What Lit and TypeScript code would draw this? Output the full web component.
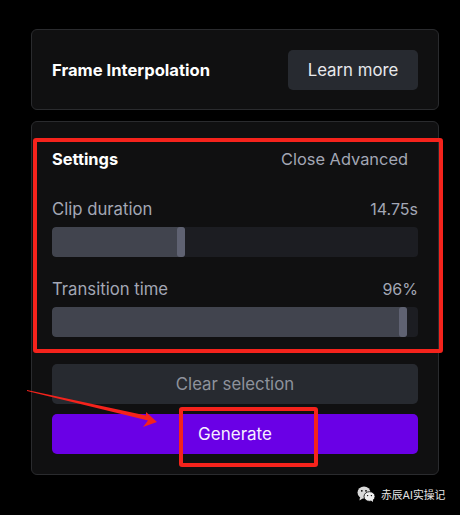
import { LitElement, html, css, svg } from "lit";
import { customElement, property } from "lit/decorators.js";

@customElement("range-row")
export class RangeRow extends LitElement {
  @property() label = "";
  @property() value = "";
  @property({ type: Number }) fill = 0;

  render() {
    return html`
      <div class="head">
        <span class="label">${this.label}</span>
        <span>${this.value}</span>
      </div>
      <div class="track">
        <div class="fill" style="width: ${this.fill}px">
          <div class="thumb"></div>
        </div>
      </div>
    `;
  }

  static styles = css`
    :host {
      display: block;
    }
    .head {
      display: flex;
      justify-content: space-between;
      align-items: center;
      height: 20px;
      font-size: 16px;
      color: #a3a7b5;
    }
    .label {
      font-size: 16.7px;
    }
    .track {
      margin-top: 8px;
      height: 30px;
      border-radius: 4px;
      background: #1c1d22;
      overflow: hidden;
    }
    .fill {
      height: 100%;
      display: flex;
      justify-content: flex-end;
      background: #41444e;
      border-radius: 4px;
    }
    .thumb {
      width: 8px;
      height: 100%;
      border-radius: 3px;
      background: #5f6272;
    }
  `;
}

@customElement("app-root")
export class AppRoot extends LitElement {
  render() {
    return html`
      <div class="page">
        <section class="card intro">
          <h2>Frame Interpolation</h2>
          <button class="learn">Learn more</button>
        </section>

        <section class="card panel">
          <div class="settings-head">
            <h3>Settings</h3>
            <span class="advanced">Close Advanced</span>
          </div>
          <div class="ranges">
            <range-row label="Clip duration" value="14.75s" .fill=${133}></range-row>
            <range-row label="Transition time" value="96%" .fill=${355}></range-row>
          </div>
          <div class="actions">
            <button class="clear">Clear selection</button>
            <button class="generate">Generate</button>
          </div>
        </section>

        <div class="mark settings-mark"></div>
        <div class="mark generate-mark"></div>
        <svg class="arrow" width="140" height="50" viewBox="0 0 140 50">
          ${svg`<path d="M0 0 L119 25.5 L119 22 L130 32 L116 37 L121 30.5 L0 1 Z" fill="#f5231c" />`}
        </svg>

        <div class="watermark">
          <svg width="18" height="16" viewBox="0 0 18 16">
            ${svg`
              <ellipse cx="7" cy="6.5" rx="6.5" ry="6" fill="#d9d9d9" />
              <path d="M3 11 L2.5 14.5 L6.5 12 Z" fill="#d9d9d9" />
              <ellipse cx="12.5" cy="10.5" rx="5.5" ry="4.8" fill="#efefef" stroke="#000" stroke-width="0.8" />
              <path d="M14 14.5 L16 16 L15.8 13 Z" fill="#efefef" />
              <circle cx="4.8" cy="4.8" r="0.9" fill="#000" />
              <circle cx="9" cy="4.8" r="0.9" fill="#000" />
              <circle cx="10.6" cy="9.6" r="0.7" fill="#000" />
              <circle cx="14.4" cy="9.6" r="0.7" fill="#000" />
            `}
          </svg>
          <span>赤辰AI实操记</span>
        </div>
      </div>
    `;
  }

  static styles = css`
    :host {
      display: block;
      background: #000;
      font-family: Inter, "Noto Sans CJK SC", sans-serif;
    }
    .page {
      position: relative;
      box-sizing: border-box;
      height: 515px;
      padding: 29px 21px 0 31px;
      display: flex;
      flex-direction: column;
      gap: 11px;
      overflow: hidden;
    }
    .card {
      box-sizing: border-box;
      background: #101011;
      border: 1px solid #2a2b2e;
      border-radius: 6px;
    }
    .intro {
      height: 81px;
      padding: 0 20px;
      display: flex;
      align-items: center;
      justify-content: space-between;
    }
    h2,
    h3 {
      margin: 0;
      color: #fff;
      font-weight: 700;
    }
    h2 {
      font-size: 16.6px;
    }
    h3 {
      font-size: 16.4px;
    }
    button {
      border: 0;
      font-family: inherit;
      font-size: 16.8px;
      border-radius: 5px;
      padding: 0;
    }
    .learn {
      width: 130px;
      height: 40px;
      background: #272a30;
      color: #e8e9ec;
    }
    .panel {
      height: 354px;
      padding: 27px 20px 0;
    }
    .settings-head {
      display: flex;
      justify-content: space-between;
      align-items: center;
      height: 20px;
    }
    .advanced {
      margin-right: 10px;
      font-size: 16.4px;
      color: #a3a7b5;
    }
    .ranges {
      margin-top: 30px;
      display: flex;
      flex-direction: column;
      gap: 22px;
    }
    .actions {
      margin-top: 27px;
      display: flex;
      flex-direction: column;
      gap: 10px;
    }
    .actions button {
      height: 40px;
    }
    .clear {
      background: #272a30;
      color: #8e929c;
    }
    .generate {
      background: #6a00e6;
      color: #f6efff;
      font-size: 17px;
    }
    .mark {
      position: absolute;
      box-sizing: border-box;
      border: 4px solid #f5231c;
      border-radius: 3px;
    }
    .settings-mark {
      left: 33px;
      top: 138px;
      width: 410px;
      height: 215px;
    }
    .generate-mark {
      left: 179px;
      top: 407px;
      width: 139px;
      height: 60px;
    }
    .arrow {
      position: absolute;
      left: 27px;
      top: 390px;
    }
    .watermark {
      position: absolute;
      left: 357px;
      top: 486px;
      display: flex;
      align-items: center;
      gap: 6px;
      font-size: 10.8px;
      color: #e6e6e6;
      white-space: nowrap;
    }
  `;
}
